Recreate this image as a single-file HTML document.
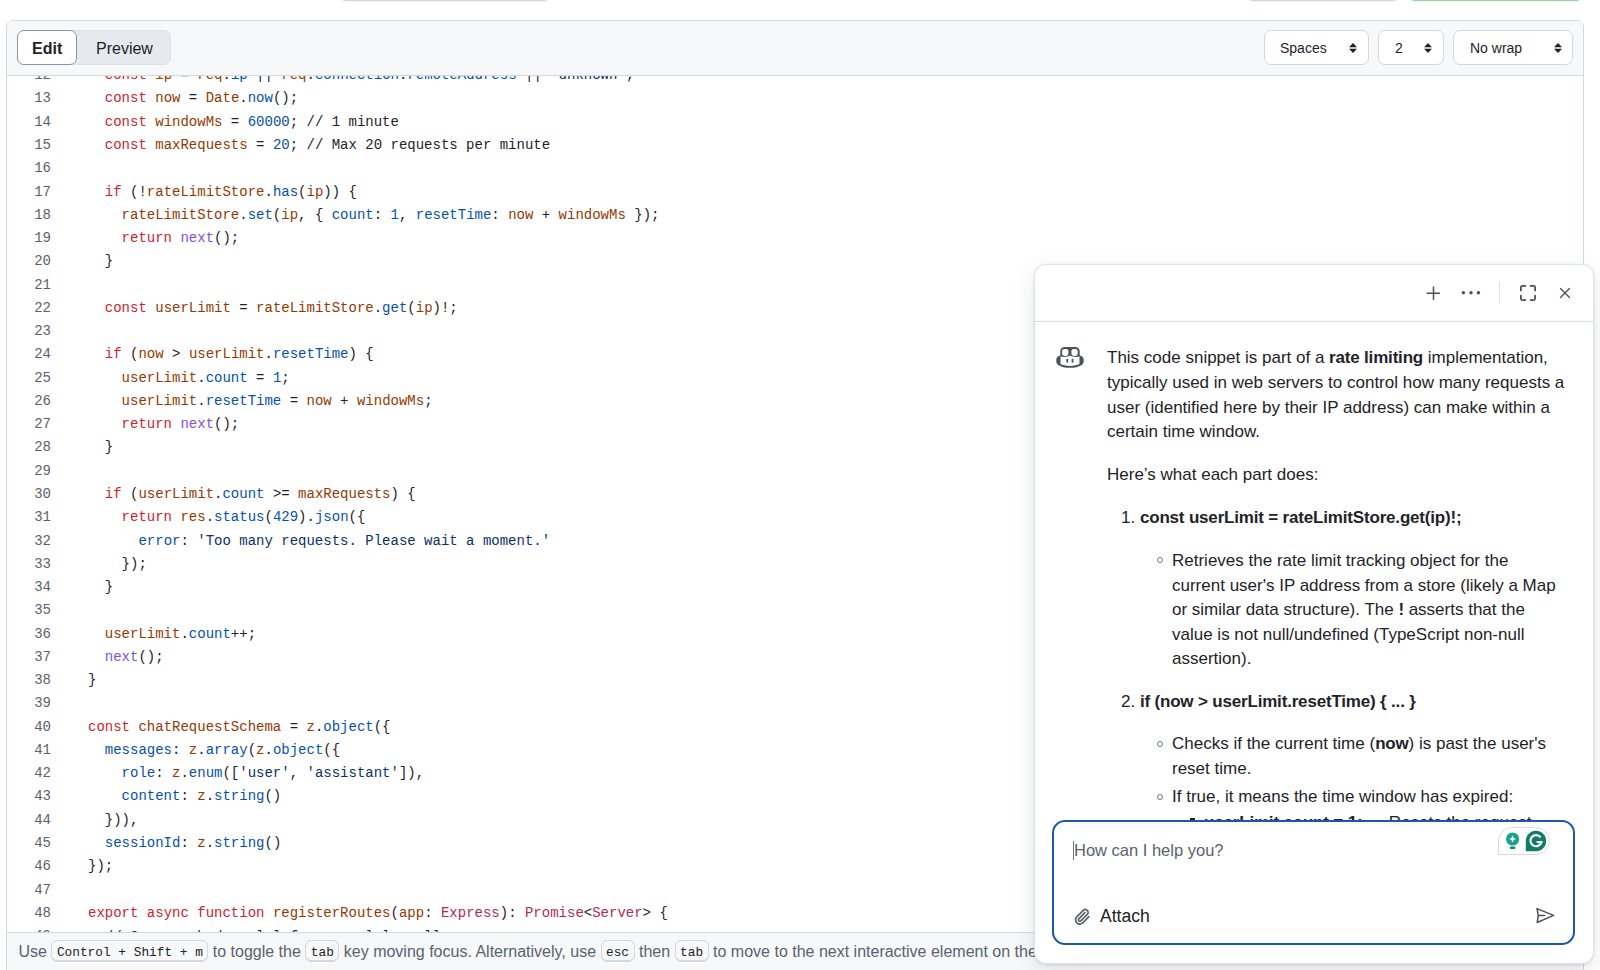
<!DOCTYPE html>
<html><head><meta charset="utf-8">
<style>
*{box-sizing:border-box;margin:0;padding:0}
html,body{width:1600px;height:970px;overflow:hidden;background:#fff;font-family:"Liberation Sans",sans-serif;color:#1f2328}
.abs{position:absolute}
/* top partial buttons */
.tb{position:absolute;top:-30px;height:31px;border:1px solid #d1d9e0;border-radius:6px;background:#f6f8fa;box-shadow:0 1px 0 rgba(31,35,40,.06)}
.tb.green{background:#a6e3b4;border-color:#8fd6a0;}
/* editor */
#ed{position:absolute;left:6px;top:20px;width:1578px;height:970px;border:1px solid #d1d9e0;border-radius:7px;overflow:hidden;background:#fff}
#hdr{position:absolute;left:0;top:0;right:0;height:55px;background:#f6f8fa;border-bottom:1px solid #d1d9e0}
.seg{position:absolute;left:10px;top:9px;width:153.5px;height:35px;background:#e6eaef;border-radius:7px;border:1px solid #dde2e7}
.seg .on{position:absolute;left:-1px;top:-1px;width:60px;height:35px;background:#fff;border:1px solid #8c959f;border-radius:7px}
.seg span{position:absolute;top:9px;font-size:16px;line-height:18px}
.sel{position:absolute;top:9px;height:35px;background:#fff;border:1px solid #d1d9e0;border-radius:7px;font-size:14px}
.sel span{position:absolute;top:9px;line-height:16px}
.sel svg{position:absolute;top:12px}
#code{position:absolute;left:0;top:55px;right:0;bottom:0;overflow:hidden}
.ln{position:absolute;left:0;width:44px;text-align:right;font-family:"Liberation Mono",monospace;font-size:14px;line-height:23.26px;color:#59636e}
.src{position:absolute;left:81px;font-family:"Liberation Mono",monospace;font-size:14px;line-height:23.26px;white-space:pre;color:#1f2328}
.k{color:#cf222e}.v{color:#953800}.p{color:#0550ae}.f{color:#8250df}.s{color:#0a3069}.t{color:#b8294a}
#foot{position:absolute;left:0;top:911px;right:0;height:60px;background:#f6f8fa;border-top:1px solid #d1d9e0;font-size:16px;color:#59636e;white-space:nowrap}
#foot .txt{position:absolute;left:11.5px;top:7.2px;line-height:24px}
kbd{display:inline-block;font-family:"Liberation Mono",monospace;font-size:12.8px;line-height:17px;padding:3px 4.5px 0;border:1px solid #d1d9e0;border-radius:6px;box-shadow:inset 0 -1px 0 #d1d9e0;background:#f6f8fa;color:#1f2328;vertical-align:1px}
/* chat */
#chat{position:absolute;left:1034px;top:264px;width:560px;height:700px;background:#fff;border:1px solid #e0e3e6;border-radius:12px;box-shadow:0 1px 3px rgba(31,35,40,.12),0 8px 24px rgba(66,74,83,.12);overflow:hidden}
#msg{font-size:17px;line-height:24.6px;white-space:nowrap;color:#1f2328}
#msg .abs{white-space:nowrap}
#msg b{font-weight:bold;letter-spacing:-.18px}
.bul{position:absolute;width:6.4px;height:6.4px;border:1px solid #6e7781;border-radius:50%}
.sq{position:absolute;width:5px;height:5px;background:#1f2328}
#inp{position:absolute;left:1052px;top:820px;width:523px;height:125px;border:2px solid #1d58a8;border-radius:13px;background:#fff}
</style></head><body>
<div class="tb" style="left:340px;width:210px"></div>
<div class="tb" style="left:1247px;width:152px"></div>
<div class="tb green" style="left:1409px;width:173px"></div>

<div id="ed">
  <div id="hdr">
    <div class="seg"><div class="on"></div>
      <span style="left:14px;font-weight:bold">Edit</span>
      <span style="left:78px">Preview</span>
    </div>
    <div class="sel" style="left:1257px;width:105px"><span style="left:15px">Spaces</span><svg style="left:84px" width="8" height="10" viewBox="0 0 8 10"><path d="M4 0L8 4.2H0z M0 5.8h8L4 10z" fill="#1f2328"/></svg></div>
    <div class="sel" style="left:1371px;width:66px"><span style="left:16px">2</span><svg style="left:45px" width="8" height="10" viewBox="0 0 8 10"><path d="M4 0L8 4.2H0z M0 5.8h8L4 10z" fill="#1f2328"/></svg></div>
    <div class="sel" style="left:1446px;width:120px"><span style="left:16px">No wrap</span><svg style="left:100px" width="8" height="10" viewBox="0 0 8 10"><path d="M4 0L8 4.2H0z M0 5.8h8L4 10z" fill="#1f2328"/></svg></div>
  </div>
  <div id="code">
<div class="ln" style="top:-11.8px">12<br>13<br>14<br>15<br>16<br>17<br>18<br>19<br>20<br>21<br>22<br>23<br>24<br>25<br>26<br>27<br>28<br>29<br>30<br>31<br>32<br>33<br>34<br>35<br>36<br>37<br>38<br>39<br>40<br>41<br>42<br>43<br>44<br>45<br>46<br>47<br>48<br>49</div>
<div class="src" style="top:-11.8px">  <span class="k">const</span> <span class="v">ip</span> = <span class="v">req</span>.<span class="p">ip</span> || <span class="v">req</span>.<span class="p">connection</span>.<span class="p">remoteAddress</span> || <span class="s">&#x27;unknown&#x27;</span>;
  <span class="k">const</span> <span class="v">now</span> = <span class="v">Date</span>.<span class="p">now</span>();
  <span class="k">const</span> <span class="v">windowMs</span> = <span class="p">60000</span>; // 1 minute
  <span class="k">const</span> <span class="v">maxRequests</span> = <span class="p">20</span>; // Max 20 requests per minute

  <span class="k">if</span> (!<span class="v">rateLimitStore</span>.<span class="p">has</span>(<span class="v">ip</span>)) {
    <span class="v">rateLimitStore</span>.<span class="p">set</span>(<span class="v">ip</span>, { <span class="p">count</span>: <span class="p">1</span>, <span class="p">resetTime</span>: <span class="v">now</span> + <span class="v">windowMs</span> });
    <span class="k">return</span> <span class="f">next</span>();
  }

  <span class="k">const</span> <span class="v">userLimit</span> = <span class="v">rateLimitStore</span>.<span class="p">get</span>(<span class="v">ip</span>)!;

  <span class="k">if</span> (<span class="v">now</span> &gt; <span class="v">userLimit</span>.<span class="p">resetTime</span>) {
    <span class="v">userLimit</span>.<span class="p">count</span> = <span class="p">1</span>;
    <span class="v">userLimit</span>.<span class="p">resetTime</span> = <span class="v">now</span> + <span class="v">windowMs</span>;
    <span class="k">return</span> <span class="f">next</span>();
  }

  <span class="k">if</span> (<span class="v">userLimit</span>.<span class="p">count</span> &gt;= <span class="v">maxRequests</span>) {
    <span class="k">return</span> <span class="v">res</span>.<span class="p">status</span>(<span class="p">429</span>).<span class="p">json</span>({
      <span class="p">error</span>: <span class="s">&#x27;Too many requests. Please wait a moment.&#x27;</span>
    });
  }

  <span class="v">userLimit</span>.<span class="p">count</span>++;
  <span class="f">next</span>();
}

<span class="k">const</span> <span class="v">chatRequestSchema</span> = <span class="v">z</span>.<span class="p">object</span>({
  <span class="p">messages</span>: <span class="v">z</span>.<span class="p">array</span>(<span class="v">z</span>.<span class="p">object</span>({
    <span class="p">role</span>: <span class="v">z</span>.<span class="p">enum</span>([<span class="s">&#x27;user&#x27;</span>, <span class="s">&#x27;assistant&#x27;</span>]),
    <span class="p">content</span>: <span class="v">z</span>.<span class="p">string</span>()
  })),
  <span class="p">sessionId</span>: <span class="v">z</span>.<span class="p">string</span>()
});

<span class="k">export</span> <span class="k">async</span> <span class="k">function</span> <span class="v">registerRoutes</span>(<span class="v">app</span>: <span class="t">Express</span>): <span class="t">Promise</span>&lt;<span class="t">Server</span>&gt; {
<span style="position:relative;top:1.2px">  // Conversahodumenlul for coporlol morllers</span></div>
</div>
  <div id="foot"><div class="txt">Use <kbd>Control + Shift + m</kbd> to toggle the <kbd>tab</kbd> key moving focus. Alternatively, use <kbd>esc</kbd> then <kbd>tab</kbd> to move to the next interactive element on the page.</div></div>
</div>

<div id="chat"></div>
<div class="abs" style="left:1035px;top:321px;width:558px;height:1px;background:#d8dee4"></div>
<svg class="abs" style="left:1426px;top:286px" width="14" height="14" viewBox="0 0 14 14"><path d="M7.5 1v12.4M1.2 7.2h12.4" stroke="#4b5259" stroke-width="1.5" stroke-linecap="round"/></svg>
<svg class="abs" style="left:1459px;top:289px" width="24" height="8" viewBox="0 0 24 8"><circle cx="4.4" cy="3.7" r="1.7" fill="#4b5259"/><circle cx="12" cy="3.7" r="1.7" fill="#4b5259"/><circle cx="19.4" cy="3.7" r="1.7" fill="#4b5259"/></svg>
<div class="abs" style="left:1499px;top:282px;width:1px;height:22px;background:#dde1e6"></div>
<svg class="abs" style="left:1519px;top:284px" width="18" height="18" viewBox="0 0 18 18"><path d="M1.9 6.4V3.4q0-1.5 1.5-1.5h3M11.6 1.9h3q1.5 0 1.5 1.5v3M16.1 11.6v3q0 1.5-1.5 1.5h-3M6.4 16.1h-3q-1.5 0-1.5-1.5v-3" fill="none" stroke="#4b5259" stroke-width="1.8" stroke-linecap="round"/></svg>
<svg class="abs" style="left:1559px;top:287px" width="12" height="12" viewBox="0 0 12 12"><path d="M1.5 1.5l9 9M10.5 1.5l-9 9" stroke="#4b5259" stroke-width="1.4" stroke-linecap="round"/></svg>
<svg class="abs" style="left:1056px;top:346px" width="28" height="22" viewBox="0 0 28 22"><path d="M4.3 5.2C4.3 2.3 6.6.9 9.2.9h9.6c2.6 0 4.9 1.4 4.9 4.3v4.4c2.5.6 4 1.9 4 4.2v1.8c0 1.6-.9 2.7-2.3 3.6-2.6 1.7-6.6 2.6-11.4 2.6s-8.8-.9-11.4-2.6C1.2 18.3.3 17.2.3 15.6v-1.8c0-2.3 1.5-3.6 4-4.2z" fill="#4b5259"/><rect x="6.1" y="2.9" width="6.3" height="7.1" rx="2.4" fill="#fff"/><rect x="15.4" y="2.9" width="6.3" height="7.1" rx="2.4" fill="#fff"/><path d="M4.5 10.5c2.3.6 5.1.6 7.3 0l2.2-.9 2.2.9c2.2.6 5 .6 7.3 0v7.6c-2 1.1-5.5 1.8-9.5 1.8s-7.5-.7-9.5-1.8z" fill="#fff"/><rect x="10.3" y="12.8" width="1.9" height="4" rx=".95" fill="#4b5259"/><rect x="15.6" y="12.8" width="1.9" height="4" rx=".95" fill="#4b5259"/></svg>
<div id="msg">
<div class="abs" style="left:1107px;top:346.4px">This code snippet is part of a <b>rate limiting</b> implementation,</div>
<div class="abs" style="left:1107px;top:371.0px">typically used in web servers to control how many requests a</div>
<div class="abs" style="left:1107px;top:395.6px">user (identified here by their IP address) can make within a</div>
<div class="abs" style="left:1107px;top:420.2px">certain time window.</div>
<div class="abs" style="left:1107px;top:463.1px">Here’s what each part does:</div>
<div class="abs" style="left:1121px;top:505.8px">1. <b>const userLimit = rateLimitStore.get(ip)!;</b></div>
<div class="bul" style="left:1157px;top:556.8px"></div>
<div class="abs" style="left:1172px;top:549.3px">Retrieves the rate limit tracking object for the</div>
<div class="abs" style="left:1172px;top:573.7px">current user's IP address from a store (likely a Map</div>
<div class="abs" style="left:1172px;top:598.1px">or similar data structure). The <b>!</b> asserts that the</div>
<div class="abs" style="left:1172px;top:622.5px">value is not null/undefined (TypeScript non-null</div>
<div class="abs" style="left:1172px;top:646.9px">assertion).</div>
<div class="abs" style="left:1121px;top:689.6px">2. <b>if (now &gt; userLimit.resetTime) { ... }</b></div>
<div class="bul" style="left:1157px;top:740.7px"></div>
<div class="abs" style="left:1172px;top:732.1px">Checks if the current time (<b>now</b>) is past the user's</div>
<div class="abs" style="left:1172px;top:756.7px">reset time.</div>
<div class="bul" style="left:1157px;top:793.6px"></div>
<div class="abs" style="left:1172px;top:785.4px">If true, it means the time window has expired:</div>
<div class="sq" style="left:1190px;top:817.5px"></div>
<div class="abs" style="left:1204px;top:811.3px"><b>userLimit.count = 1;</b> — Resets the request</div>
</div>
<div id="inp"></div>
<div class="abs" style="left:1073px;top:841px;width:1.2px;height:19px;background:#6e7781"></div>
<div class="abs" style="left:1074px;top:840px;font-size:16.5px;line-height:20px;color:#59636e;white-space:nowrap">How can I help you?</div>
<div id="gram" class="abs" style="left:1498px;top:827px;width:52px;height:28px;border:1px solid #d8dcdf;border-radius:14px 14px 14px 0;background:#fff"></div>
<svg class="abs" style="left:1505px;top:832px" width="16" height="19" viewBox="0 0 16 19"><circle cx="7.6" cy="7" r="6.6" fill="#17a58b"/><path d="M7.6 3.6l1.1 2.3 2.3 1.1-2.3 1.1-1.1 2.3-1.1-2.3L4.2 7l2.3-1.1z" fill="#fff"/><rect x="4.8" y="14.6" width="5.6" height="2.4" rx="1.2" fill="#10876f"/></svg>
<svg class="abs" style="left:1525px;top:830px" width="22" height="22" viewBox="0 0 22 22"><path d="M11 .8C16.6.8 21.2 5.4 21.2 11S16.6 21.2 11 21.2H.8V11C.8 5.4 5.4.8 11 .8z" fill="#0e7d64"/><path d="M15.6 7.4A5.6 5.6 0 1 0 16.5 12H11.6" fill="none" stroke="#fff" stroke-width="2.1"/></svg>
<svg class="abs" style="left:1073px;top:907px" width="18" height="19" viewBox="0 0 16 16"><path d="M12.212 3.02a1.753 1.753 0 0 0-2.478.003l-5.83 5.83a3.007 3.007 0 0 0-.88 2.127c0 .795.315 1.551.88 2.116.567.567 1.333.89 2.126.89.79 0 1.548-.321 2.116-.89l5.48-5.48a.75.75 0 0 1 1.061 1.06l-5.48 5.48a4.492 4.492 0 0 1-3.177 1.33c-1.2 0-2.345-.487-3.187-1.33a4.483 4.483 0 0 1-1.32-3.177c0-1.195.475-2.341 1.32-3.186l5.83-5.83a3.25 3.25 0 0 1 5.553 2.297c0 .863-.343 1.691-.953 2.301L7.439 12.39c-.375.377-.884.59-1.416.593a1.998 1.998 0 0 1-1.412-.593 1.992 1.992 0 0 1 0-2.828l5.48-5.48a.751.751 0 0 1 1.042.018.751.751 0 0 1 .018 1.042l-5.48 5.48a.492.492 0 0 0 0 .707.499.499 0 0 0 .354.147c.131 0 .259-.053.354-.147l5.833-5.827a1.755 1.755 0 0 0 0-2.481Z" fill="#59636e"/></svg>
<div class="abs" style="left:1100px;top:904px;font-size:17.6px;line-height:24.6px;color:#1f2328;white-space:nowrap">Attach</div>
<svg class="abs" style="left:1530px;top:902px" width="30" height="26" viewBox="0 0 30 26"><path d="M7 6.6L23.6 13.4 7.2 20.5 8.3 13.4z M8.3 13.4H14.6" fill="none" stroke="#4b5259" stroke-width="1.5" stroke-linejoin="round" stroke-linecap="round"/></svg>
</body></html>
